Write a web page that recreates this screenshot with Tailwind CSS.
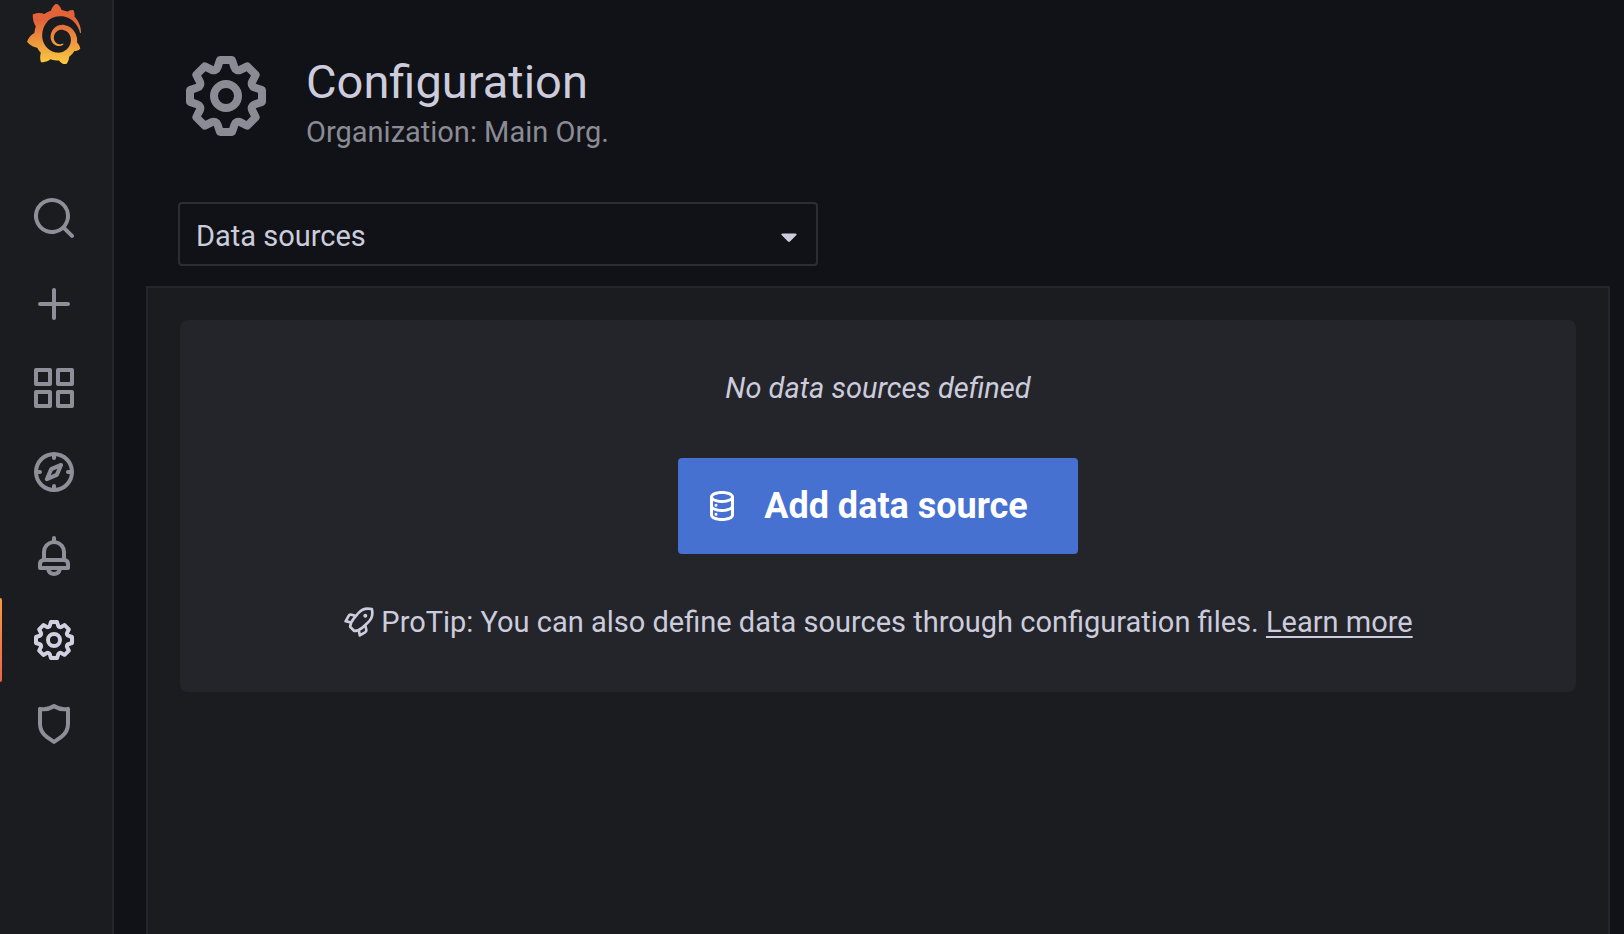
<!DOCTYPE html>
<html lang="en">
<head>
<meta charset="utf-8">
<meta name="viewport" content="width=device-width, initial-scale=1">
<title>Configuration: Data sources</title>
<script src="https://cdn.jsdelivr.net/npm/@tailwindcss/browser@4"></script>
</head>
<body class="flex min-h-screen bg-[#111217] font-[Roboto,sans-serif] text-[29px] leading-[44px] text-[#ccccdc]">

<nav aria-label="Main" class="flex w-[114px] shrink-0 flex-col border-r-2 border-[#25262b] bg-[#1b1c20] text-[#8f8f99]">
  <a href="#" aria-label="Home" class="flex justify-center pt-1 pr-1">
    <svg class="h-[60px] w-[54px]" viewBox="8 4 335 356" preserveAspectRatio="none" aria-hidden="true">
      <defs>
        <linearGradient id="flame" gradientUnits="userSpaceOnUse" x1="175.5" y1="355" x2="175.5" y2="100">
          <stop offset="0" stop-color="#f9c940"/>
          <stop offset="1" stop-color="#e2623a"/>
        </linearGradient>
      </defs>
      <path fill="url(#flame)" d="M342,161.2c-0.6-6.1-1.6-13.1-3.6-20.9c-2-7.7-5-16.2-9.4-25c-4.4-8.8-10.1-17.9-17.5-26.8c-2.9-3.5-6.1-6.9-9.5-10.2c5.1-20.3-6.2-37.9-6.2-37.9c-19.5-1.2-31.9,6.1-36.5,9.4c-0.8-0.3-1.5-0.7-2.3-1c-3.3-1.3-6.7-2.6-10.3-3.7c-3.5-1.1-7.1-2.1-10.8-3c-3.7-0.9-7.4-1.6-11.2-2.2c-0.7-0.1-1.3-0.2-2-0.3c-8.5-27.2-32.9-38.6-32.9-38.6c-27.3,17.3-32.4,41.5-32.4,41.5s-0.1,0.5-0.3,1.4c-1.5,0.4-3,0.9-4.5,1.3c-2.1,0.6-4.2,1.4-6.2,2.2c-2.1,0.8-4.1,1.6-6.2,2.5c-4.1,1.8-8.2,3.8-12.2,6c-3.9,2.2-7.7,4.6-11.4,7.1c-0.5-0.2-1-0.4-1-0.4c-37.8-14.4-71.3,2.9-71.3,2.9c-3.1,40.2,15.1,65.5,18.7,70.1c-0.9,2.5-1.7,5-2.5,7.5c-2.8,9.1-4.9,18.4-6.2,28.1c-0.2,1.4-0.4,2.8-0.5,4.2C18.8,192.7,8.5,228,8.5,228c29.1,33.5,63.1,35.6,63.1,35.6c0,0,0.1-0.1,0.1-0.1c4.3,7.7,9.3,15,14.9,21.9c2.4,2.9,4.8,5.6,7.4,8.3c-10.6,30.4,1.5,55.6,1.5,55.6c32.4,1.2,53.7-14.2,58.2-17.7c3.2,1.1,6.5,2.1,9.8,2.9c10,2.6,20.2,4.1,30.4,4.5c2.5,0.1,5.1,0.2,7.6,0.1l1.2,0l0.8,0l1.6,0l1.6-0.1l0,0.1c15.3,21.8,42.1,24.9,42.1,24.9c19.1-20.1,20.2-40.1,20.2-44.4l0,0c0,0,0-0.1,0-0.3c0-0.4,0-0.6,0-0.6l0,0c0-0.3,0-0.6,0-0.9c4-2.8,7.8-5.8,11.4-9.1c7.6-6.9,14.3-14.8,19.9-23.3c0.5-0.8,1-1.6,1.5-2.4c21.6,1.2,36.9-13.4,36.9-13.4c-3.6-22.5-16.4-33.5-19.1-35.6l0,0c0,0-0.1-0.1-0.3-0.2c-0.2-0.1-0.2-0.2-0.2-0.2c0,0,0,0,0,0c-0.1-0.1-0.3-0.2-0.5-0.3c0.1-1.4,0.2-2.7,0.3-4.1c0.2-2.4,0.2-4.9,0.2-7.3l0-1.8l0-0.9l0-0.5c0-0.6,0-0.4,0-0.6l-0.1-1.5l-0.1-2c0-0.7-0.1-1.3-0.2-1.9c-0.1-0.6-0.1-1.3-0.2-1.9l-0.2-1.9l-0.3-1.9c-0.4-2.5-0.8-4.9-1.4-7.4c-2.3-9.7-6.1-18.9-11-27.2c-5-8.3-11.2-15.6-18.3-21.8c-7-6.2-14.9-11.2-23.1-14.9c-8.3-3.7-16.9-6.1-25.5-7.2c-4.3-0.6-8.6-0.8-12.9-0.7l-1.6,0l-0.4,0c-0.1,0-0.6,0-0.5,0l-0.7,0l-1.6,0.1c-0.6,0-1.2,0.1-1.7,0.1c-2.2,0.2-4.4,0.5-6.5,0.9c-8.6,1.6-16.7,4.7-23.8,9c-7.1,4.3-13.3,9.6-18.3,15.6c-5,6-8.9,12.7-11.6,19.6c-2.7,6.9-4.2,14.1-4.6,21c-0.1,1.7-0.1,3.5-0.1,5.2c0,0.4,0,0.9,0,1.3l0.1,1.4c0.1,0.8,0.1,1.7,0.2,2.5c0.3,3.5,1,6.9,1.9,10.1c1.9,6.5,4.9,12.4,8.6,17.4c3.7,5,8.2,9.1,12.9,12.4c4.7,3.2,9.8,5.5,14.8,7c5,1.5,10,2.1,14.7,2.1c0.6,0,1.2,0,1.7,0c0.3,0,0.6,0,0.9,0c0.3,0,0.6,0,0.9-0.1c0.5,0,1-0.1,1.5-0.1c0.1,0,0.3,0,0.4-0.1l0.5-0.1c0.3,0,0.6-0.1,0.9-0.1c0.6-0.1,1.1-0.2,1.7-0.3c0.6-0.1,1.1-0.2,1.6-0.4c1.1-0.2,2.1-0.6,3.1-0.9c2-0.7,4-1.5,5.7-2.4c1.8-0.9,3.4-2,5-3c0.4-0.3,0.9-0.6,1.3-1c1.6-1.3,1.9-3.7,0.6-5.3c-1.1-1.4-3.1-1.8-4.7-0.9c-0.4,0.2-0.8,0.4-1.2,0.6c-1.4,0.7-2.8,1.3-4.3,1.8c-1.5,0.5-3.1,0.9-4.7,1.2c-0.8,0.1-1.6,0.2-2.5,0.3c-0.4,0-0.8,0.1-1.3,0.1c-0.4,0-0.9,0-1.2,0c-0.4,0-0.8,0-1.2,0c-0.5,0-1,0-1.5-0.1l-0.3,0l-0.3,0c-0.2,0-0.5,0-0.7-0.1c-0.5-0.1-0.9-0.1-1.4-0.2c-3.7-0.5-7.4-1.6-10.9-3.2c-3.6-1.6-7-3.8-10.1-6.6c-3.1-2.8-5.8-6.1-7.9-9.9c-2.1-3.8-3.6-8-4.3-12.4c-0.3-2.2-0.5-4.5-0.4-6.7c0-0.6,0.1-1.2,0.1-1.8l0-0.3l0-0.5c0-0.3,0.1-0.6,0.1-0.9c0.1-1.2,0.3-2.4,0.5-3.6c1.7-9.6,6.5-19,13.9-26.1c1.9-1.8,3.9-3.4,6-4.9c2.1-1.5,4.4-2.8,6.8-3.9c2.4-1.1,4.8-2,7.4-2.7c2.5-0.7,5.1-1.1,7.8-1.4c1.3-0.1,2.6-0.2,4-0.2c0.4,0,0.6,0,0.9,0l1.1,0l0.7,0l0.4,0l1.1,0.1c2.9,0.2,5.7,0.6,8.5,1.3c5.6,1.2,11.1,3.3,16.2,6.1c10.2,5.7,18.9,14.5,24.2,25.1c2.7,5.3,4.6,11,5.5,16.9c0.2,1.5,0.4,3,0.5,4.5l0.1,1.1l0.1,1.1c0,0.4,0,0.8,0,1.1c0,0.4,0,0.8,0,1.1l0,1l0,1.1c0,0.7-0.1,1.9-0.1,2.6c-0.1,1.6-0.3,3.3-0.5,4.9c-0.2,1.6-0.5,3.2-0.8,4.8c-0.3,1.6-0.7,3.2-1.1,4.7c-0.8,3.1-1.8,6.2-3,9.3c-2.4,6-5.6,11.8-9.4,17.1c-7.7,10.6-18.2,19.2-30.2,24.7c-6,2.7-12.3,4.7-18.8,5.7c-3.2,0.6-6.5,0.9-9.8,1l-0.6,0l-0.5,0l-1.1,0l-1.6,0l-0.8,0l-0.4,0c-1.8,0-3.5-0.1-5.3-0.3c-7-0.5-13.9-1.8-20.7-3.7c-6.7-1.9-13.2-4.6-19.4-7.8c-12.3-6.6-23.4-15.6-32-26.5c-4.3-5.4-8.1-11.3-11.2-17.4c-3.1-6.1-5.6-12.6-7.4-19.1c-1.8-6.6-2.9-13.3-3.4-20.1l-0.1-1.3l0-0.3l0-0.3l0-0.6l0-1.1l0-0.3l0-0.4l0-0.8l0-1.6l0-0.3l0-0.7c0-0.8,0-1.7,0-2.5c0.1-3.3,0.4-6.8,0.8-10.2c0.4-3.4,1-6.9,1.7-10.3c0.7-3.4,1.5-6.8,2.5-10.2c1.9-6.7,4.3-13.2,7.1-19.3c5.7-12.2,13.1-23.1,22-31.8c2.2-2.2,4.5-4.2,6.9-6.2c2.4-1.9,4.9-3.7,7.5-5.4c2.5-1.7,5.2-3.2,7.9-4.6c1.3-0.7,2.7-1.4,4.1-2c0.7-0.3,1.4-0.6,2.1-0.9c0.7-0.3,1.4-0.6,2.1-0.9c2.8-1.2,5.7-2.2,8.7-3.1c0.7-0.2,1.5-0.4,2.2-0.7c0.7-0.2,1.5-0.4,2.2-0.6c1.5-0.4,3-0.8,4.5-1.1c0.7-0.2,1.5-0.3,2.3-0.5c0.8-0.2,1.5-0.3,2.3-0.5c0.8-0.1,1.5-0.3,2.3-0.4l1.1-0.2l1.2-0.2c0.8-0.1,1.5-0.2,2.3-0.3c0.9-0.1,1.7-0.2,2.6-0.3c0.7-0.1,1.9-0.2,2.6-0.3c0.5-0.1,1.1-0.1,1.6-0.2l1.1-0.1l0.5-0.1l0.6,0c0.9-0.1,1.7-0.1,2.6-0.2l1.3-0.1l0.4,0l0.6,0c0.7,0,1.5-0.1,2.2-0.1c2.9-0.1,5.9-0.1,8.8,0c5.8,0.2,11.5,0.9,17,1.9c11.1,2.1,21.5,5.6,31,10.3c9.5,4.6,17.9,10.3,25.3,16.5c0.5,0.4,0.9,0.8,1.4,1.2c0.4,0.4,0.9,0.8,1.3,1.2c0.9,0.8,1.7,1.6,2.6,2.4c0.9,0.8,1.7,1.6,2.5,2.4c0.8,0.8,1.6,1.6,2.4,2.5c3.1,3.3,6,6.6,8.6,10c5.2,6.7,9.4,13.5,12.7,19.9c0.2,0.4,0.4,0.8,0.6,1.2c0.2,0.4,0.4,0.8,0.6,1.2c0.4,0.8,0.8,1.6,1.1,2.4c0.4,0.8,0.7,1.5,1.1,2.3c0.3,0.8,0.7,1.5,1,2.3c1.2,3,2.4,5.9,3.3,8.6c1.5,4.4,2.6,8.3,3.5,11.7c0.3,1.4,1.6,2.3,3,2.1c1.5-0.1,2.6-1.3,2.6-2.8C342.6,170.4,342.5,166.1,342,161.2z"/>
    </svg>
  </a>
  <ul class="mt-28 flex flex-col">
    <li><a href="#" aria-label="Search" class="flex h-[86px] items-start justify-center pt-[18px] pr-1">
      <svg class="size-12" viewBox="0 0 24 24" fill="currentColor" aria-hidden="true"><path d="M21.71,20.29,18,16.61A9,9,0,1,0,16.61,18l3.68,3.68a1,1,0,0,0,1.42,0A1,1,0,0,0,21.71,20.29ZM11,18a7,7,0,1,1,7-7A7,7,0,0,1,11,18Z"/></svg></a></li>
    <li><a href="#" aria-label="Create" class="flex h-[84px] items-center justify-center pr-1">
      <svg class="size-12" viewBox="0 0 24 24" fill="currentColor" aria-hidden="true"><path d="M19,11H13V5a1,1,0,0,0-2,0v6H5a1,1,0,0,0,0,2h6v6a1,1,0,0,0,2,0V13h6a1,1,0,0,0,0-2Z"/></svg></a></li>
    <li><a href="#" aria-label="Dashboards" class="flex h-[84px] items-center justify-center pr-1">
      <svg class="size-12" viewBox="0 0 24 24" fill="currentColor" aria-hidden="true"><path d="M10,13H3a1,1,0,0,0-1,1v7a1,1,0,0,0,1,1h7a1,1,0,0,0,1-1V14A1,1,0,0,0,10,13ZM9,20H4V15H9ZM21,2H14a1,1,0,0,0-1,1v7a1,1,0,0,0,1,1h7a1,1,0,0,0,1-1V3A1,1,0,0,0,21,2ZM20,9H15V4h5Zm1,4H14a1,1,0,0,0-1,1v7a1,1,0,0,0,1,1h7a1,1,0,0,0,1-1V14A1,1,0,0,0,21,13Zm-1,7H15V15h5ZM10,2H3A1,1,0,0,0,2,3v7a1,1,0,0,0,1,1h7a1,1,0,0,0,1-1V3A1,1,0,0,0,10,2ZM9,9H4V4H9Z"/></svg></a></li>
    <li><a href="#" aria-label="Explore" class="flex h-[84px] items-center justify-center pr-1">
      <svg class="size-12" viewBox="0 0 24 24" fill="currentColor" aria-hidden="true"><path d="M12,2A10,10,0,1,0,22,12,10,10,0,0,0,12,2Zm1,17.93V19a1,1,0,0,0-2,0v.93A8,8,0,0,1,4.07,13H5a1,1,0,0,0,0-2H4.07A8,8,0,0,1,11,4.07V5a1,1,0,0,0,2,0V4.07A8,8,0,0,1,19.93,11H19a1,1,0,0,0,0,2h.93A8,8,0,0,1,13,19.93ZM15.14,7.55l-5,2.12a1,1,0,0,0-.52.52l-2.12,5a1,1,0,0,0,.21,1.1,1,1,0,0,0,.7.29.93.93,0,0,0,.4-.08l5-2.12a1,1,0,0,0,.52-.52l2.12-5a1,1,0,0,0-1.31-1.31Zm-2.49,5.1-2.28,1,1-2.28,2.28-1Z"/></svg></a></li>
    <li><a href="#" aria-label="Alerting" class="flex h-[84px] items-center justify-center pr-1">
      <svg class="size-12" viewBox="0 0 24 24" fill="currentColor" aria-hidden="true"><path d="M18,13.18V10a6,6,0,0,0-5-5.91V3a1,1,0,0,0-2,0V4.09A6,6,0,0,0,6,10v3.18A3,3,0,0,0,4,16v2a1,1,0,0,0,1,1H8.14a4,4,0,0,0,7.72,0H19a1,1,0,0,0,1-1V16A3,3,0,0,0,18,13.18ZM8,10a4,4,0,0,1,8,0v3H8Zm4,10a2,2,0,0,1-1.72-1h3.44A2,2,0,0,1,12,20Zm6-3H6V16a1,1,0,0,1,1-1H17a1,1,0,0,1,1,1Z"/></svg></a></li>
    <li><a href="#" aria-label="Configuration" aria-current="page" class="relative flex h-[84px] items-center justify-center pr-1 text-[#d0d0e0]">
      <span class="absolute inset-y-0 left-0 w-[2px] rounded-r-[2px] bg-linear-to-b from-[#f79a3e] to-[#ef6149]"></span>
      <svg class="size-12" viewBox="0 0 24 24" fill="currentColor" aria-hidden="true"><path d="M21.32,9.55l-1.89-.63.89-1.78A1,1,0,0,0,20.13,6L18,3.87a1,1,0,0,0-1.15-.19l-1.78.89-.63-1.89A1,1,0,0,0,13.5,2h-3a1,1,0,0,0-.95.68L8.92,4.57,7.14,3.68A1,1,0,0,0,6,3.87L3.87,6a1,1,0,0,0-.19,1.15l.89,1.78-1.89.63A1,1,0,0,0,2,10.5v3a1,1,0,0,0,.68.95l1.89.63-.89,1.78A1,1,0,0,0,3.87,18L6,20.13a1,1,0,0,0,1.15.19l1.78-.89.63,1.89a1,1,0,0,0,.95.68h3a1,1,0,0,0,.95-.68l.63-1.89,1.78.89A1,1,0,0,0,18,20.13L20.13,18a1,1,0,0,0,.19-1.15l-.89-1.78,1.89-.63A1,1,0,0,0,22,13.5v-3A1,1,0,0,0,21.32,9.55ZM20,12.78l-1.2.4A2,2,0,0,0,17.64,16l.57,1.14-1.1,1.1L16,17.64a2,2,0,0,0-2.79,1.16l-.4,1.2H11.22l-.4-1.2A2,2,0,0,0,8,17.64l-1.14.57-1.1-1.1L6.36,16A2,2,0,0,0,5.2,13.18L4,12.78V11.22l1.2-.4A2,2,0,0,0,6.36,8L5.79,6.89l1.1-1.1L8,6.36A2,2,0,0,0,10.82,5.2l.4-1.2h1.56l.4,1.2A2,2,0,0,0,16,6.36l1.14-.57,1.1,1.1L17.64,8a2,2,0,0,0,1.16,2.79l1.2.4ZM12,8a4,4,0,1,0,4,4A4,4,0,0,0,12,8Zm0,6a2,2,0,1,1,2-2A2,2,0,0,1,12,14Z"/></svg></a></li>
    <li><a href="#" aria-label="Server Admin" class="flex h-[84px] items-center justify-center pr-1">
      <svg class="size-12" viewBox="0 0 24 24" fill="currentColor" aria-hidden="true"><path d="M19.63,3.65a1,1,0,0,0-.84-.2,8,8,0,0,1-6.22-1.27,1,1,0,0,0-1.14,0A8,8,0,0,1,5.21,3.45a1,1,0,0,0-.84.2A1,1,0,0,0,4,4.43v7.45a9,9,0,0,0,3.77,7.33l3.65,2.6a1,1,0,0,0,1.16,0l3.65-2.6A9,9,0,0,0,20,11.88V4.43A1,1,0,0,0,19.63,3.65ZM18,11.88a7,7,0,0,1-2.93,5.7L12,19.77,8.93,17.58A7,7,0,0,1,6,11.88V5.58a10,10,0,0,0,6-1.39,10,10,0,0,0,6,1.39Z"/></svg></a></li>
  </ul>
</nav>

<main class="flex min-w-0 flex-1 flex-col pr-[14px] pl-8">
  <header class="px-8 pt-12">
    <div class="flex items-start gap-8">
      <svg class="size-24 shrink-0 text-[#8b8b95]" viewBox="0 0 24 24" fill="currentColor" aria-hidden="true"><path d="M21.32,9.55l-1.89-.63.89-1.78A1,1,0,0,0,20.13,6L18,3.87a1,1,0,0,0-1.15-.19l-1.78.89-.63-1.89A1,1,0,0,0,13.5,2h-3a1,1,0,0,0-.95.68L8.92,4.57,7.14,3.68A1,1,0,0,0,6,3.87L3.87,6a1,1,0,0,0-.19,1.15l.89,1.78-1.89.63A1,1,0,0,0,2,10.5v3a1,1,0,0,0,.68.95l1.89.63-.89,1.78A1,1,0,0,0,3.87,18L6,20.13a1,1,0,0,0,1.15.19l1.78-.89.63,1.89a1,1,0,0,0,.95.68h3a1,1,0,0,0,.95-.68l.63-1.89,1.78.89A1,1,0,0,0,18,20.13L20.13,18a1,1,0,0,0,.19-1.15l-.89-1.78,1.89-.63A1,1,0,0,0,22,13.5v-3A1,1,0,0,0,21.32,9.55ZM20,12.78l-1.2.4A2,2,0,0,0,17.64,16l.57,1.14-1.1,1.1L16,17.64a2,2,0,0,0-2.79,1.16l-.4,1.2H11.22l-.4-1.2A2,2,0,0,0,8,17.64l-1.14.57-1.1-1.1L6.36,16A2,2,0,0,0,5.2,13.18L4,12.78V11.22l1.2-.4A2,2,0,0,0,6.36,8L5.79,6.89l1.1-1.1L8,6.36A2,2,0,0,0,10.82,5.2l.4-1.2h1.56l.4,1.2A2,2,0,0,0,16,6.36l1.14-.57,1.1,1.1L17.64,8a2,2,0,0,0,1.16,2.79l1.2.4ZM12,8a4,4,0,1,0,4,4A4,4,0,0,0,12,8Zm0,6a2,2,0,1,1,2-2A2,2,0,0,1,12,14Z"/></svg>
      <div class="pt-[6px]">
        <h1 class="text-[47px] leading-[56px]">Configuration</h1>
        <p class="text-[#8b8b95]">Organization: Main Org.</p>
      </div>
    </div>
    <div class="relative mt-12 w-[640px] max-w-full">
      <select aria-label="Configuration section" class="block h-16 w-full appearance-none rounded-[4px] border-2 border-[#2d2e34] bg-[#111217] pt-1 pr-12 pl-4 text-[29px] text-[#ccccdc]">
        <option selected>Data sources</option>
        <option>Users</option>
        <option>Teams</option>
        <option>Plugins</option>
        <option>Preferences</option>
        <option>API keys</option>
      </select>
      <svg class="pointer-events-none absolute top-[31px] right-[21px] h-[10px] w-4" viewBox="0 0 16 10" fill="#ccccdc" aria-hidden="true"><path d="M1.5 0.5h13c1 0 1.5 1 .7 1.8L9 8.5c-.6.6-1.4.6-2 0L.8 2.3C0 1.5.5.5 1.5.5Z"/></svg>
    </div>
  </header>

  <section class="mt-5 flex-1 border-2 border-b-0 border-[#25262b] bg-[#1b1c20] p-8">
    <div class="flex flex-col items-center rounded-lg bg-[#24252b] px-8 pt-[46px] pb-12 text-center">
      <p class="italic">No data sources defined</p>
      <a href="#" class="mt-12 flex h-24 items-center gap-6 rounded-[4px] bg-[#4671d1] pr-[50px] pl-[26px] text-[36px] font-bold text-white">
        <svg class="size-9 shrink-0" viewBox="0 0 24 24" fill="currentColor" aria-hidden="true"><path d="M8,16.5a1,1,0,1,0,1,1A1,1,0,0,0,8,16.5ZM12,2C8,2,4,3.37,4,6V18c0,2.63,4,4,8,4s8-1.37,8-4V6C20,3.37,16,2,12,2Zm6,16c0,.71-2.28,2-6,2s-6-1.29-6-2V14.73A13.16,13.16,0,0,0,12,16a13.16,13.16,0,0,0,6-1.27Zm0-6c0,.71-2.28,2-6,2s-6-1.29-6-2V8.73A13.16,13.16,0,0,0,12,10a13.16,13.16,0,0,0,6-1.27ZM12,8C8.28,8,6,6.71,6,6s2.28-2,6-2,6,1.29,6,2S15.72,8,12,8ZM8,10.5a1,1,0,1,0,1,1A1,1,0,0,0,8,10.5Z"/></svg>
        Add data source
      </a>
      <p class="mt-[46px] flex items-center gap-[6px]">
        <svg class="size-8 shrink-0" viewBox="0 0 24 24" fill="currentColor" aria-hidden="true"><path d="M22.601 2.062a1 1 0 0 0-.713-.713A11.252 11.252 0 0 0 10.47 4.972L9.354 6.296 6.75 5.668a2.777 2.777 0 0 0-3.387 1.357l-2.2 3.9a1 1 0 0 0 .661 1.469l3.073.659a13.42 13.42 0 0 0-.555 2.434 1 1 0 0 0 .284.836l3.1 3.1a1 1 0 0 0 .708.293c.028 0 .057-.001.086-.004a12.17 12.17 0 0 0 2.492-.49l.644 3.004a1 1 0 0 0 1.469.661l3.905-2.202a3.035 3.035 0 0 0 1.375-3.304l-.668-2.76 1.237-1.137A11.204 11.204 0 0 0 22.6 2.062ZM3.572 10.723l1.556-2.766a.826.826 0 0 1 1.07-.375l1.718.416-.65.772a13.095 13.095 0 0 0-1.59 2.398Zm12.47 8.222-2.715 1.532-.43-2.005a11.34 11.34 0 0 0 2.414-1.62l.743-.683.404 1.664a1.041 1.041 0 0 1-.416 1.112Zm1.615-6.965-3.685 3.386a9.773 9.773 0 0 1-5.17 2.304l-2.405-2.404a10.932 10.932 0 0 1 2.401-5.206l1.679-1.993a.964.964 0 0 0 .078-.092L11.99 6.27a9.278 9.278 0 0 1 8.81-3.12 9.218 9.218 0 0 1-3.143 8.829Zm-.923-6.164a1.5 1.5 0 1 0 1.5 1.5 1.5 1.5 0 0 0-1.5-1.5Z"/></svg>
        <span>ProTip: You can also define data sources through configuration files. <a href="#" class="underline decoration-2 underline-offset-4">Learn more</a></span>
      </p>
    </div>
  </section>
</main>
</body>
</html>
